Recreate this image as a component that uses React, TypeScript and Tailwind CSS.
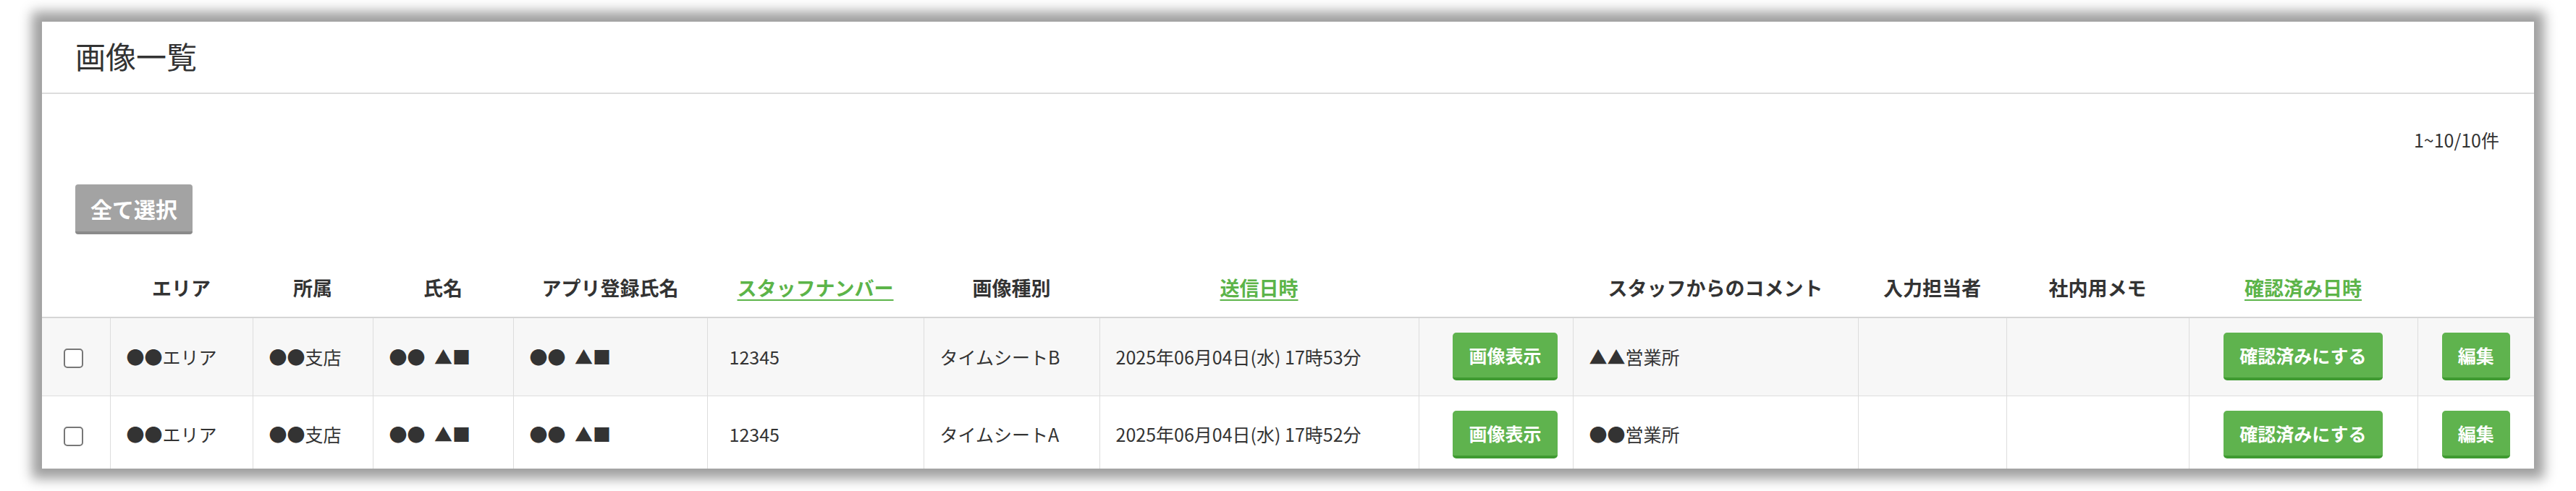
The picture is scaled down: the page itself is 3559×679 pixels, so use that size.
import React from "react";

type Row = {
  area: string;
  branch: string;
  name: string;
  appName: string;
  staffNo: string;
  kind: string;
  sentAt: string;
  comment: string;
  striped: boolean;
};

const rows: Row[] = [
  {
    area: "●●エリア",
    branch: "●●支店",
    name: "●●\u2002▲■",
    appName: "●●\u2002▲■",
    staffNo: "12345",
    kind: "タイムシートB",
    sentAt: "2025年06月04日(水) 17時53分",
    comment: "▲▲営業所",
    striped: true,
  },
  {
    area: "●●エリア",
    branch: "●●支店",
    name: "●●\u2002▲■",
    appName: "●●\u2002▲■",
    staffNo: "12345",
    kind: "タイムシートA",
    sentAt: "2025年06月04日(水) 17時52分",
    comment: "●●営業所",
    striped: false,
  },
];

const colWidths = [94, 197, 166, 194, 268, 299, 243, 441, 213, 394, 205, 252, 316];

function GreenButton({ label }: { label: string }) {
  return (
    <button className="h-[66px] whitespace-nowrap rounded-[5px] border-b-[4px] border-[#3f9a31] bg-[#5fb34e] px-[22px] text-[25px] font-bold leading-none text-white">
      {label}
    </button>
  );
}

function HeadLink({ label }: { label: string }) {
  return <span className="text-[#5cb449] underline underline-offset-[5px]">{label}</span>;
}

export default function App() {
  const head = "h-[80px] text-center align-middle text-[27px] font-bold text-[#333]";
  const cell = "border-l border-[#dddddd] px-[22px] align-middle text-[25px] text-[#333]";

  return (
    <div className="min-h-screen bg-white px-[58px] pt-[30px] font-['Noto_Sans_CJK_JP','Noto_Sans',sans-serif]">
      <div className="h-[618px] overflow-hidden bg-white shadow-[0_0_16px_14px_rgba(0,0,0,0.38)]">
        <div className="flex h-[100px] items-center border-b-2 border-[#dddddd] px-[46px] pb-[6px]">
          <h1 className="text-[42px] font-normal text-[#333]">画像一覧</h1>
        </div>

        <div className="px-[48px] pt-[46px]">
          <p className="text-right text-[25px] leading-[34px] text-[#333]">1~10/10件</p>
          <button className="mt-[45px] -ml-[2px] h-[69px] rounded-[4px] border-b-[4px] border-[#8a8a8a] bg-[#a3a3a3] px-[21px] text-[30px] font-bold leading-none text-white">
            全て選択
          </button>
        </div>

        <table className="mt-[35px] w-full table-fixed border-collapse">
          <colgroup>
            {colWidths.map((w, i) => (
              <col key={i} style={{ width: w }} />
            ))}
            <col />
          </colgroup>
          <thead>
            <tr className="border-b-2 border-[#d6d6d6]">
              <th className={head}></th>
              <th className={head}>エリア</th>
              <th className={head}>所属</th>
              <th className={head}>氏名</th>
              <th className={head}>アプリ登録氏名</th>
              <th className={head}>
                <HeadLink label="スタッフナンバー" />
              </th>
              <th className={head}>画像種別</th>
              <th className={head}>
                <HeadLink label="送信日時" />
              </th>
              <th className={head}></th>
              <th className={head}>スタッフからのコメント</th>
              <th className={head}>入力担当者</th>
              <th className={head}>社内用メモ</th>
              <th className={head}>
                <HeadLink label="確認済み日時" />
              </th>
              <th className={head}></th>
            </tr>
          </thead>
          <tbody>
            {rows.map((r, i) => (
              <tr
                key={i}
                className={`h-[108px] border-b border-[#dddddd] ${r.striped ? "bg-[#f7f7f7]" : "bg-white"}`}
              >
                <td className="text-center align-middle">
                  <input
                    type="checkbox"
                    className="mt-[4px] -ml-[6px] h-[27px] w-[27px] appearance-none rounded-[5px] border-2 border-[#777] bg-white align-middle"
                  />
                </td>
                <td className={cell}>{r.area}</td>
                <td className={cell}>{r.branch}</td>
                <td className={cell}>{r.name}</td>
                <td className={cell}>{r.appName}</td>
                <td className={`${cell} pl-[30px]`}>{r.staffNo}</td>
                <td className={cell}>{r.kind}</td>
                <td className={cell}>{r.sentAt}</td>
                <td className="border-l border-[#dddddd] pl-[34px] pr-[8px] text-center align-middle">
                  <GreenButton label="画像表示" />
                </td>
                <td className={cell}>{r.comment}</td>
                <td className={cell}></td>
                <td className={cell}></td>
                <td className={`${cell} text-center`}>
                  <GreenButton label="確認済みにする" />
                </td>
                <td className="border-l border-[#dddddd] text-center align-middle">
                  <GreenButton label="編集" />
                </td>
              </tr>
            ))}
          </tbody>
        </table>
      </div>
    </div>
  );
}
